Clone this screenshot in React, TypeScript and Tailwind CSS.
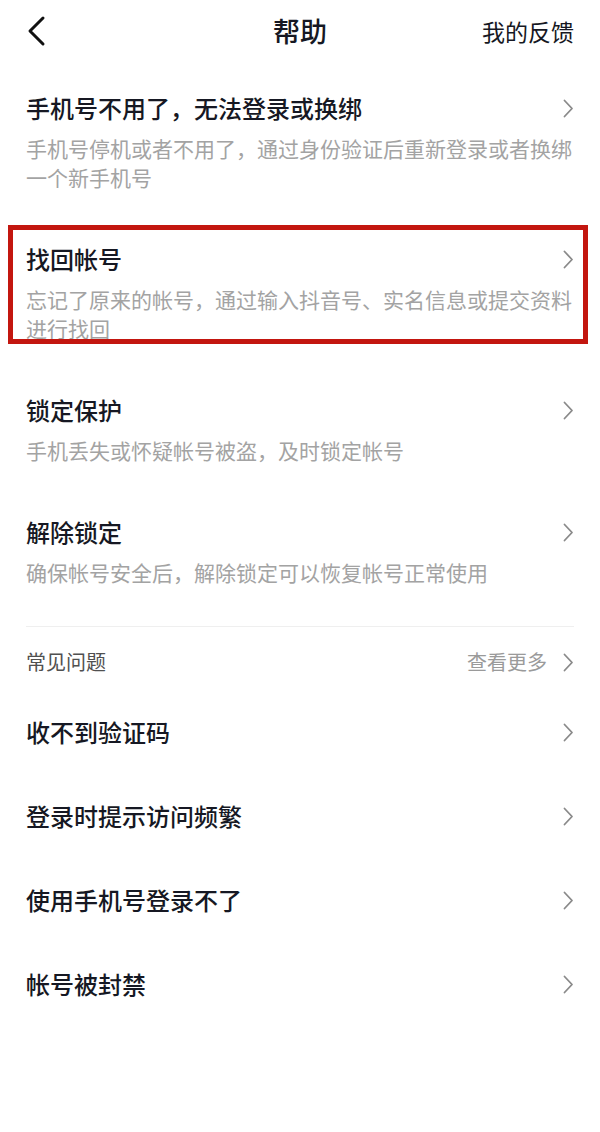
import React from "react";

const Chevron = ({ className = "" }: { className?: string }) => (
  <svg width="11" height="19" viewBox="0 0 11 19" className={className} fill="none">
    <path d="M1.5 1.5 L9 9.5 L1.5 17.5" stroke="#8a8a8a" strokeWidth="1.8" strokeLinecap="round" strokeLinejoin="round" />
  </svg>
);

type Item = { title: string; desc: string; highlight?: boolean };

const items: Item[] = [
  { title: "手机号不用了，无法登录或换绑", desc: "手机号停机或者不用了，通过身份验证后重新登录或者换绑一个新手机号" },
  { title: "找回帐号", desc: "忘记了原来的帐号，通过输入抖音号、实名信息或提交资料进行找回", highlight: true },
  { title: "锁定保护", desc: "手机丢失或怀疑帐号被盗，及时锁定帐号" },
  { title: "解除锁定", desc: "确保帐号安全后，解除锁定可以恢复帐号正常使用" },
];

const faqs = ["收不到验证码", "登录时提示访问频繁", "使用手机号登录不了", "帐号被封禁"];

export default function App() {
  return (
    <div
      className="w-[600px] h-[1132px] bg-white overflow-hidden text-[#161823]"
      style={{ fontFamily: '"Noto Sans CJK SC", "Noto Sans", sans-serif' }}
    >
      {/* Header */}
      <div className="h-[62px] flex items-center justify-between px-[26px] relative">
        <svg width="22" height="32" viewBox="0 0 22 32" fill="none">
          <path d="M17 3 L4 16 L17 29" stroke="#111" strokeWidth="3" strokeLinecap="round" strokeLinejoin="round" />
        </svg>
        <div className="absolute left-1/2 -translate-x-1/2 text-[27px] leading-[36px] font-medium">帮助</div>
        <div className="text-[23px] leading-[32px]">我的反馈</div>
      </div>

      {/* Main items */}
      <div className="pt-[4px]">
        {items.map((it) => (
          <div key={it.title} className="relative pt-[26px] pb-[25px] pl-[26px] pr-[26px]">
            <div className="flex items-center justify-between">
              <div className="text-[24px] leading-[32px] font-medium">{it.title}</div>
              <Chevron />
            </div>
            <div className="mt-[10px] mr-[-12px] text-[21px] leading-[29px] text-[#a3a3a3]">{it.desc}</div>
            {it.highlight && (
              <div className="absolute left-[8px] right-[12px] top-[8px] bottom-[24px] border-[5px] border-[#c3160f] pointer-events-none" />
            )}
          </div>
        ))}
      </div>

      {/* Divider */}
      <div className="mt-[14px] mx-[26px] h-px bg-[#efefef]" />

      {/* FAQ header */}
      <div className="pt-[21px] px-[26px] flex items-center justify-between">
        <div className="text-[20px] leading-[28px] text-[#505050]">常见问题</div>
        <div className="flex items-center gap-[16px]">
          <span className="text-[20px] leading-[28px] text-[#9a9a9a]">查看更多</span>
          <Chevron />
        </div>
      </div>

      {/* FAQ items */}
      <div className="pt-[14px]">
        {faqs.map((f) => (
          <div key={f} className="h-[84px] px-[26px] flex items-center justify-between">
            <div className="text-[24px] leading-[32px] font-medium">{f}</div>
            <Chevron />
          </div>
        ))}
      </div>
    </div>
  );
}
